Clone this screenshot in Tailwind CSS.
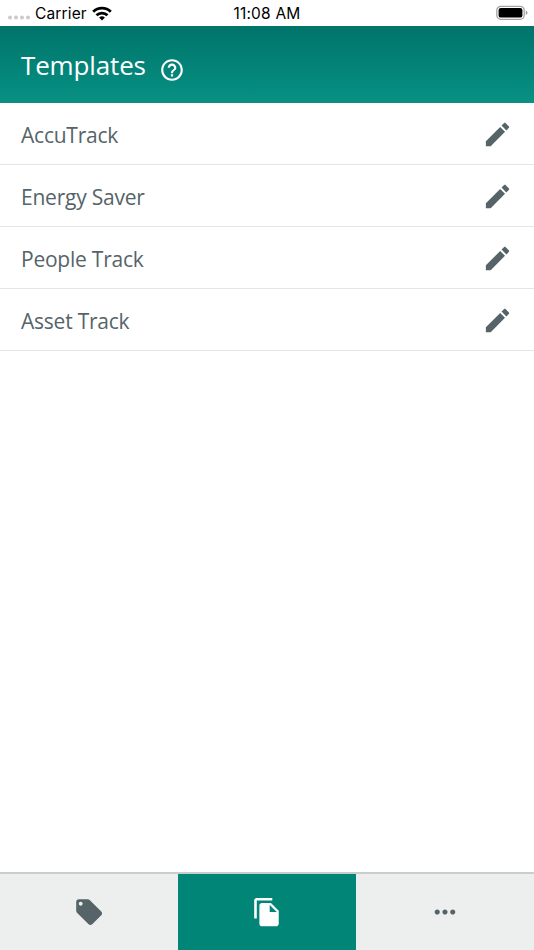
<!DOCTYPE html>
<html lang="en">
<head>
    <meta charset="UTF-8">
    <meta name="viewport" content="width=device-width, initial-scale=1.0">
    <title>Templates</title>
    <script src="https://cdn.jsdelivr.net/npm/@tailwindcss/browser@4"></script>
</head>
<body class="bg-white h-screen flex flex-col overflow-hidden font-['Open_Sans',sans-serif] text-[#566469]">
    <!-- Status bar -->
    <div class="h-[26px] shrink-0 grid grid-cols-3 items-center pl-2 pr-1.5 font-['Inter',sans-serif] text-[15.5px] leading-[24px] font-normal text-black">
        <div class="flex items-center">
            <svg class="w-[22px] h-[5px] mt-2" viewBox="0 0 22 5" fill="#cbcbcb">
                <circle cx="2" cy="2.5" r="2"/>
                <circle cx="8" cy="2.5" r="2"/>
                <circle cx="14" cy="2.5" r="2"/>
                <circle cx="20" cy="2.5" r="2"/>
            </svg>
            <span class="ml-[5px] pt-0.5 tracking-[0.15px]">Carrier</span>
            <svg class="w-5 h-[15px] ml-[5px]" viewBox="0 0 20 15" fill="none" stroke="black" stroke-width="2.8">
                <path d="M1.2 5.8a12.4 12.4 0 0 1 17.6 0"/>
                <path d="M4.5 9.3a7.8 7.8 0 0 1 11 0"/>
                <path d="M10 14.6l-2.9-3a4.1 4.1 0 0 1 5.8 0z" fill="black" stroke="none"/>
            </svg>
        </div>
        <div class="text-center pt-0.5 pr-0.5 tracking-[0.2px]">11:08 AM</div>
        <svg class="w-[32px] h-4 justify-self-end" viewBox="0 0 32 16">
            <rect x="0.8" y="1.3" width="27.4" height="13" rx="4" fill="white" stroke="#a3a3a3" stroke-width="1.3"/>
            <rect x="2.6" y="3" width="23.8" height="9.6" rx="2.2" fill="black"/>
            <path d="M29.8 5.6q1.7.8 1.7 2.2t-1.7 2.2z" fill="#999"/>
        </svg>
    </div>

    <!-- Page Header -->
    <header class="h-[77px] shrink-0 flex items-center px-[21px] bg-linear-to-b from-[#00746a] to-[#089184] text-white">
        <h1 class="text-[26px] leading-9 tracking-[-0.15px]">Templates</h1>
        <svg class="w-[26px] h-[26px] ml-[13px] mt-[11px]" viewBox="0 0 24 24" fill="currentColor">
            <path d="M11 18h2v-2h-2v2zm1-16C6.48 2 2 6.48 2 12s4.48 10 10 10 10-4.48 10-10S17.52 2 12 2zm0 18c-4.41 0-8-3.59-8-8s3.59-8 8-8 8 3.59 8 8-3.59 8-8 8zm0-14c-2.21 0-4 1.79-4 4h2c0-1.1.9-2 2-2s2 .9 2 2c0 2-3 1.75-3 5h2c0-2.25 3-2.5 3-5 0-2.21-1.79-4-4-4z"/>
        </svg>
    </header>

    <!-- Template list -->
    <ul class="flex-grow text-[21px] leading-8 tracking-[-0.23px]">
        <li class="h-[62px] flex items-center justify-between px-[21px] border-b border-[#e4e6e6]">
            <span class="mt-0.5">AccuTrack</span>
            <svg class="w-[31px] h-[31px] mt-0.5" viewBox="0 0 24 24" fill="currentColor"><path d="M3 17.25V21h3.75L17.81 9.94l-3.75-3.75L3 17.25zM20.71 7.04c.39-.39.39-1.02 0-1.41l-2.34-2.34c-.39-.39-1.02-.39-1.41 0l-1.83 1.83 3.75 3.75 1.83-1.83z"/></svg>
        </li>
        <li class="h-[62px] flex items-center justify-between px-[21px] border-b border-[#e4e6e6]">
            <span class="mt-0.5">Energy Saver</span>
            <svg class="w-[31px] h-[31px] mt-0.5" viewBox="0 0 24 24" fill="currentColor"><path d="M3 17.25V21h3.75L17.81 9.94l-3.75-3.75L3 17.25zM20.71 7.04c.39-.39.39-1.02 0-1.41l-2.34-2.34c-.39-.39-1.02-.39-1.41 0l-1.83 1.83 3.75 3.75 1.83-1.83z"/></svg>
        </li>
        <li class="h-[62px] flex items-center justify-between px-[21px] border-b border-[#e4e6e6]">
            <span class="mt-0.5">People Track</span>
            <svg class="w-[31px] h-[31px] mt-0.5" viewBox="0 0 24 24" fill="currentColor"><path d="M3 17.25V21h3.75L17.81 9.94l-3.75-3.75L3 17.25zM20.71 7.04c.39-.39.39-1.02 0-1.41l-2.34-2.34c-.39-.39-1.02-.39-1.41 0l-1.83 1.83 3.75 3.75 1.83-1.83z"/></svg>
        </li>
        <li class="h-[62px] flex items-center justify-between px-[21px] border-b border-[#e4e6e6]">
            <span class="mt-0.5">Asset Track</span>
            <svg class="w-[31px] h-[31px] mt-0.5" viewBox="0 0 24 24" fill="currentColor"><path d="M3 17.25V21h3.75L17.81 9.94l-3.75-3.75L3 17.25zM20.71 7.04c.39-.39.39-1.02 0-1.41l-2.34-2.34c-.39-.39-1.02-.39-1.41 0l-1.83 1.83 3.75 3.75 1.83-1.83z"/></svg>
        </li>
    </ul>

    <!-- Bottom tabs -->
    <nav class="h-[78px] shrink-0 grid grid-cols-3 border-t-2 border-[#cccccc] bg-[#edefee]">
        <a href="#" class="flex items-center justify-center">
            <svg class="w-[31px] h-[31px]" viewBox="0.3 0.3 24 24" fill="currentColor"><path d="M21.41 11.58l-9-9C12.05 2.22 11.55 2 11 2H4c-1.1 0-2 .9-2 2v7c0 .55.22 1.05.59 1.42l9 9c.36.36.86.58 1.41.58.55 0 1.05-.22 1.41-.59l7-7c.37-.36.59-.86.59-1.41 0-.55-.23-1.06-.59-1.42zM5.5 7C4.67 7 4 6.33 4 5.5S4.67 4 5.5 4 7 4.67 7 5.5 6.33 7 5.5 7z"/></svg>
        </a>
        <a href="#" class="flex items-center justify-center bg-[#008577] text-white">
            <svg class="w-[31px] h-[31px]" viewBox="0.3 0.3 24 24" fill="currentColor"><path d="M16 1H4c-1.1 0-2 .9-2 2v14h2V3h12V1zm-1 4l6 6v10c0 1.1-.9 2-2 2H7.99C6.89 23 6 22.1 6 21l.01-14c0-1.1.89-2 1.99-2h7zm-1 7h5.5L14 6.5V12z"/></svg>
        </a>
        <a href="#" class="flex items-center justify-center">
            <svg class="w-[31px] h-[31px]" viewBox="0.4 0.4 24 24" fill="currentColor"><path d="M6 10c-1.1 0-2 .9-2 2s.9 2 2 2 2-.9 2-2-.9-2-2-2zm12 0c-1.1 0-2 .9-2 2s.9 2 2 2 2-.9 2-2-.9-2-2-2zm-6 0c-1.1 0-2 .9-2 2s.9 2 2 2 2-.9 2-2-.9-2-2-2z"/></svg>
        </a>
    </nav>
</body>
</html>
